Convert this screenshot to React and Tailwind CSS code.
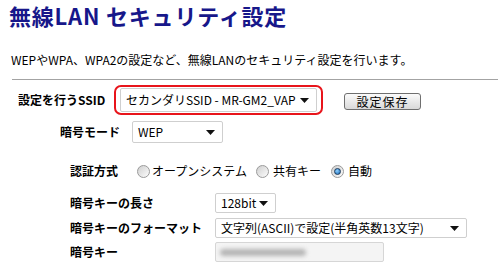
import React from 'react';

const Arrow = () => (
  <svg width="9" height="5" viewBox="0 0 9 5" className="shrink-0">
    <polygon points="0,0 9,0 4.5,5" fill="#111" />
  </svg>
);

function Select({ value, className = '' }) {
  return (
    <div className={`flex items-center justify-between bg-white border border-[#cfcfcf] rounded-[2px] pl-[5px] pr-[7px] text-[12px] leading-none whitespace-nowrap ${className}`}>
      <span>{value}</span>
      <Arrow />
    </div>
  );
}

function Radio({ checked }) {
  return (
    <span className="w-[13px] h-[13px] rounded-full border border-[#9a9a9a] bg-gradient-to-br from-[#cfcfcf] to-[#fdfdfd] flex items-center justify-center shrink-0">
      {checked && (
        <span className="w-[7px] h-[7px] rounded-full border border-[#1b3a5c] bg-[radial-gradient(circle_at_40%_35%,#8fd0ff,#1466b4)]" />
      )}
    </span>
  );
}

export default function App() {
  return (
    <div className="w-[498px] h-[270px] overflow-hidden bg-white text-black text-[12px] font-['Noto_Sans_CJK_JP','Noto_Sans',sans-serif]">
      <h1 className="h-[30px] pt-[2px] pl-[9px] text-[22px] leading-[26px] font-bold tracking-[0.8px] text-[#17178a]">
        無線LAN セキュリティ設定
      </h1>

      <p className="mt-[22px] pl-[11px] leading-[16px]">
        WEPやWPA、WPA2の設定など、無線LANのセキュリティ設定を行います。
      </p>

      <div className="mt-[11px] ml-[12px] h-px bg-[#a3a3a3]" />

      {/* SSID row */}
      <div className="mt-[5px] flex items-center h-[30px]">
        <div className="w-[114px] pl-[18px] font-bold">設定を行うSSID</div>
        <div className="w-[209px] h-[30px] border-2 border-[#e8141b] rounded-[7px] px-[4px] flex items-center">
          <Select value="セカンダリSSID - MR-GM2_VAP" className="w-full h-[24px]" />
        </div>
        <button className="ml-[21px] mt-[3px] w-[77px] h-[17px] border border-[#6f6f6f] rounded-[3px] bg-gradient-to-b from-[#fbfbfb] to-[#d9d9d9] text-[12px] leading-[15px] tracking-[1px]">
          設定保存
        </button>
      </div>

      {/* mode */}
      <div className="mt-[6px] flex items-center h-[22px]">
        <div className="w-[132px] pl-[60px] font-bold">暗号モード</div>
        <Select value="WEP" className="w-[91px] h-[22px]" />
      </div>

      {/* auth */}
      <div className="mt-[20px] flex items-center h-[16px]">
        <div className="w-[137px] pl-[70px] font-bold">認証方式</div>
        <Radio />
        <span className="ml-[2px]">オープンシステム</span>
        <span className="ml-[9px]"><Radio /></span>
        <span className="ml-[4px]">共有キー</span>
        <span className="ml-[10px]"><Radio checked /></span>
        <span className="ml-[4px]">自動</span>
      </div>

      {/* key length */}
      <div className="mt-[14px] flex items-center h-[20px]">
        <div className="w-[215px] pl-[70px] font-bold">暗号キーの長さ</div>
        <Select value="128bit" className="w-[61px] h-[20px]" />
      </div>

      {/* key format */}
      <div className="mt-[5px] flex items-center h-[20px]">
        <div className="w-[215px] pl-[70px] font-bold whitespace-nowrap">暗号キーのフォーマット</div>
        <Select value="文字列(ASCII)で設定(半角英数13文字)" className="w-[252px] h-[20px]" />
      </div>

      {/* key */}
      <div className="mt-[4px] flex items-center h-[20px]">
        <div className="w-[215px] pl-[70px] font-bold">暗号キー</div>
        <div className="w-[169px] h-[20px] border border-[#d6d6d6] rounded-[2px] bg-[#f4f4f4] flex items-center pl-[4px] overflow-hidden">
          <div className="w-[86px] h-[7px] rounded-full bg-[#b4b4b4] blur-[2px]" />
        </div>
      </div>
    </div>
  );
}
